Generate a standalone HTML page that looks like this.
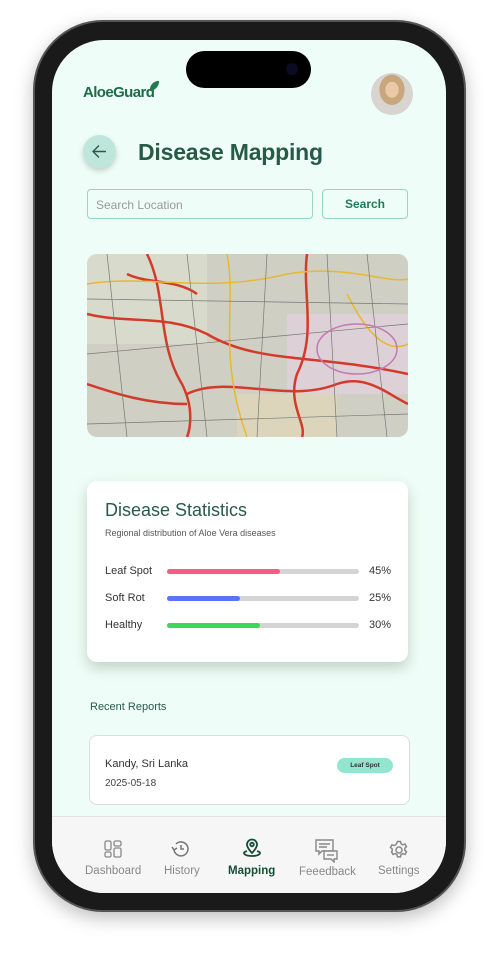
<!DOCTYPE html>
<html><head><meta charset="utf-8"><style>
*{box-sizing:border-box;margin:0;padding:0}
body{width:501px;height:959px;background:#fff;position:relative;overflow:hidden;font-family:"Liberation Sans",sans-serif}
.phone{position:absolute;left:33px;top:20px;width:433px;height:892px;border-radius:70px;background:#1a1a1a;box-shadow:0 6px 18px rgba(0,0,0,.25);border:2px solid #555}
.screen{position:absolute;left:52px;top:40px;width:394px;height:853px;border-radius:52px;background:#eefdf7;overflow:hidden}
.island{position:absolute;left:186px;top:51px;width:125px;height:37px;border-radius:19px;background:#000}
.cam{position:absolute;left:286px;top:63px;width:12px;height:12px;border-radius:50%;background:#0b0b25}
.abs{position:absolute}
</style></head><body>
<div class="phone"></div>
<div class="screen">
 <div class="abs" style="left:31px;top:44px;font-size:15px;font-weight:bold;color:#1f6b4a;letter-spacing:-.6px">AloeGuard</div>
 <svg class="abs" style="left:96px;top:40px" width="12" height="12" viewBox="0 0 14 14"><path d="M2 13 C2 5 7 1 13 1 C13 8 8 12 2 13Z" fill="#1f7a4c"/></svg>
 <div class="abs" style="left:319px;top:33px;width:42px;height:42px;border-radius:50%;background:radial-gradient(ellipse at 50% 40%,#e9c9a8 0 22%,#c9a77c 23% 42%,#d8d4d0 43%)"></div>
 <div class="abs" style="left:31px;top:95px;width:33px;height:33px;border-radius:50%;background:#bfe6db;box-shadow:0 3px 6px rgba(0,0,0,.18)"></div>
 <svg class="abs" style="left:39px;top:103px" width="17" height="17" viewBox="0 0 17 17"><path d="M15 8.5H2M8 2.5L2 8.5L8 14.5" stroke="#2a5a48" stroke-width="1.4" fill="none"/></svg>
 <div class="abs" style="left:86px;top:99px;font-size:23px;font-weight:bold;color:#285a48;letter-spacing:-.2px">Disease Mapping</div>
 <div class="abs" style="left:35px;top:149px;width:226px;height:30px;border:1px solid #9ad6c0;border-radius:4px;font-size:12px;color:#999;padding:8px 8px">Search Location</div>
 <div class="abs" style="left:270px;top:149px;width:86px;height:30px;border:1px solid #9ad6c0;border-radius:4px;font-size:12px;color:#1f7a57;font-weight:bold;text-align:center;line-height:28px">Search</div>
 <svg class="abs" style="left:35px;top:214px;border-radius:10px" width="321" height="183" viewBox="0 0 321 183">
  <rect width="321" height="183" fill="#cfcfc4"/>
  <rect x="0" y="0" width="120" height="90" fill="#d8dacb"/>
  <rect x="200" y="60" width="121" height="80" fill="#ddd0d6"/>
  <rect x="150" y="140" width="100" height="43" fill="#dcd5bb"/>
  <g stroke="#d43a2a" stroke-width="2.5" fill="none">
   <path d="M60 0 C80 40 70 90 95 130 C110 160 100 183 100 183"/>
   <path d="M0 60 C40 70 80 60 120 80 C170 110 230 100 321 120"/>
   <path d="M100 140 C140 120 200 150 250 130 C280 120 300 140 321 150"/>
   <path d="M220 0 C215 40 230 80 210 120 C200 150 220 170 215 183"/>
   <path d="M0 130 C30 140 60 150 100 150"/>
   <path d="M40 20 C60 30 90 25 110 40"/>
  </g>
  <g stroke="#e8b830" stroke-width="1.5" fill="none">
   <path d="M0 30 C60 20 120 40 200 20 C260 10 300 30 321 25"/>
   <path d="M140 0 C150 50 130 100 160 183"/>
   <path d="M260 40 C280 80 300 100 321 90"/>
  </g>
  <g stroke="#777" stroke-width=".7" fill="none">
   <path d="M20 0 L40 183M180 0 L170 183M0 100 L321 70M280 0 L300 183M0 170 L321 160M0 45 L321 50M100 0 L120 183M240 0 L250 183"/>
  </g>
  <ellipse cx="270" cy="95" rx="40" ry="25" fill="none" stroke="#c47ab0" stroke-width="1.5"/>
 </svg>
 <div class="abs" style="left:35px;top:441px;width:321px;height:181px;background:#fff;border-radius:10px;box-shadow:0 6px 14px rgba(0,0,0,.18)"></div>
 <div class="abs" style="left:53px;top:460px;font-size:18px;color:#285a48">Disease Statistics</div>
 <div class="abs" style="left:53px;top:488px;font-size:9px;color:#555">Regional distribution of Aloe Vera diseases</div>
 <div class="abs" style="left:53px;top:525px;font-size:11px;color:#333">Leaf Spot</div>
 <div class="abs" style="left:53px;top:552px;font-size:11px;color:#333">Soft Rot</div>
 <div class="abs" style="left:53px;top:579px;font-size:11px;color:#333">Healthy</div>
 <div class="abs" style="left:115px;top:529px;width:192px;height:5px;border-radius:3px;background:#d4d4d4"><div style="width:113px;height:5px;border-radius:3px;background:#fa5a86"></div></div>
 <div class="abs" style="left:115px;top:556px;width:192px;height:5px;border-radius:3px;background:#d4d4d4"><div style="width:73px;height:5px;border-radius:3px;background:#5a73fa"></div></div>
 <div class="abs" style="left:115px;top:583px;width:192px;height:5px;border-radius:3px;background:#d4d4d4"><div style="width:93px;height:5px;border-radius:3px;background:#3dd65a"></div></div>
 <div class="abs" style="left:317px;top:525px;font-size:11px;color:#333">45%</div>
 <div class="abs" style="left:317px;top:552px;font-size:11px;color:#333">25%</div>
 <div class="abs" style="left:317px;top:579px;font-size:11px;color:#333">30%</div>
 <div class="abs" style="left:38px;top:661px;font-size:11px;color:#285a48">Recent Reports</div>
 <div class="abs" style="left:37px;top:695px;width:321px;height:70px;background:#fff;border:1px solid #ddd;border-radius:8px"></div>
 <div class="abs" style="left:53px;top:718px;font-size:11px;color:#333">Kandy, Sri Lanka</div>
 <div class="abs" style="left:53px;top:738px;font-size:10px;color:#444">2025-05-18</div>
 <div class="abs" style="left:285px;top:718px;width:56px;height:15px;border-radius:8px;background:#93e5cf;font-size:6.5px;font-weight:bold;color:#333;text-align:center;line-height:15px">Leaf Spot</div>
 <div class="abs" style="left:0;top:776px;width:394px;height:80px;background:#f6f6f6;border-top:1px solid #e2e2e2"></div>
 <svg class="abs" style="left:52px;top:800px" width="18" height="18" viewBox="0 0 18 18" fill="none" stroke="#888" stroke-width="1.3"><rect x="1" y="1" width="6" height="9" rx="1.5"/><rect x="1" y="12" width="6" height="5" rx="1.5"/><rect x="10" y="1" width="7" height="5" rx="1.5"/><rect x="10" y="8" width="7" height="9" rx="1.5"/></svg>
 <svg class="abs" style="left:119px;top:799px" width="20" height="20" viewBox="0 0 20 20" fill="none" stroke="#777" stroke-width="1.5"><path d="M3 10a7 7 0 1 0 2-5"/><path d="M1 8l2 3 3-2"/><path d="M10 6v4h3"/></svg>
 <svg class="abs" style="left:189px;top:797px" width="22" height="22" viewBox="0 0 22 22" fill="none" stroke="#174d36" stroke-width="1.8"><path d="M11 16s-5-5-5-8.5a5 5 0 0 1 10 0C16 11 11 16 11 16z"/><circle cx="11" cy="7.5" r="1.8"/><path d="M6 14c-3 1-4 2-2 3.5 3 2 11 2 14 0 2-1.5 1-2.5-2-3.5"/></svg>
 <svg class="abs" style="left:263px;top:799px" width="24" height="24" viewBox="0 0 24 24" fill="none" stroke="#888" stroke-width="1.4"><path d="M1 1h17v11H7l-3 3v-3H1z"/><path d="M4 5h11M4 8h8"/><path d="M9 13v-1h13v8h-3v3l-3-3H9z" fill="#f6f6f6"/><path d="M12 16h7"/></svg>
 <svg class="abs" style="left:337px;top:800px" width="20" height="20" viewBox="0 0 20 20" fill="none" stroke="#888" stroke-width="1.5"><circle cx="10" cy="10" r="3"/><path d="M8.5 1.5h3l.5 2.3 1.8 1 2.2-.8 1.5 2.6-1.7 1.6v2l1.7 1.6-1.5 2.6-2.2-.8-1.8 1-.5 2.3h-3l-.5-2.3-1.8-1-2.2.8-1.5-2.6L3.2 11V9L1.5 7.4 3 4.8l2.2.8 1.8-1z"/></svg>
 <div class="abs" style="left:33px;top:825px;font-size:11.5px;color:#888">Dashboard</div>
 <div class="abs" style="left:112px;top:825px;font-size:11.5px;color:#888">History</div>
 <div class="abs" style="left:176px;top:825px;font-size:11.5px;color:#174d36;font-weight:bold">Mapping</div>
 <div class="abs" style="left:247px;top:826px;font-size:11.5px;color:#888">Feeedback</div>
 <div class="abs" style="left:326px;top:825px;font-size:11.5px;color:#888">Settings</div>
</div>
<div class="island"></div><div class="cam"></div>
</body></html>
